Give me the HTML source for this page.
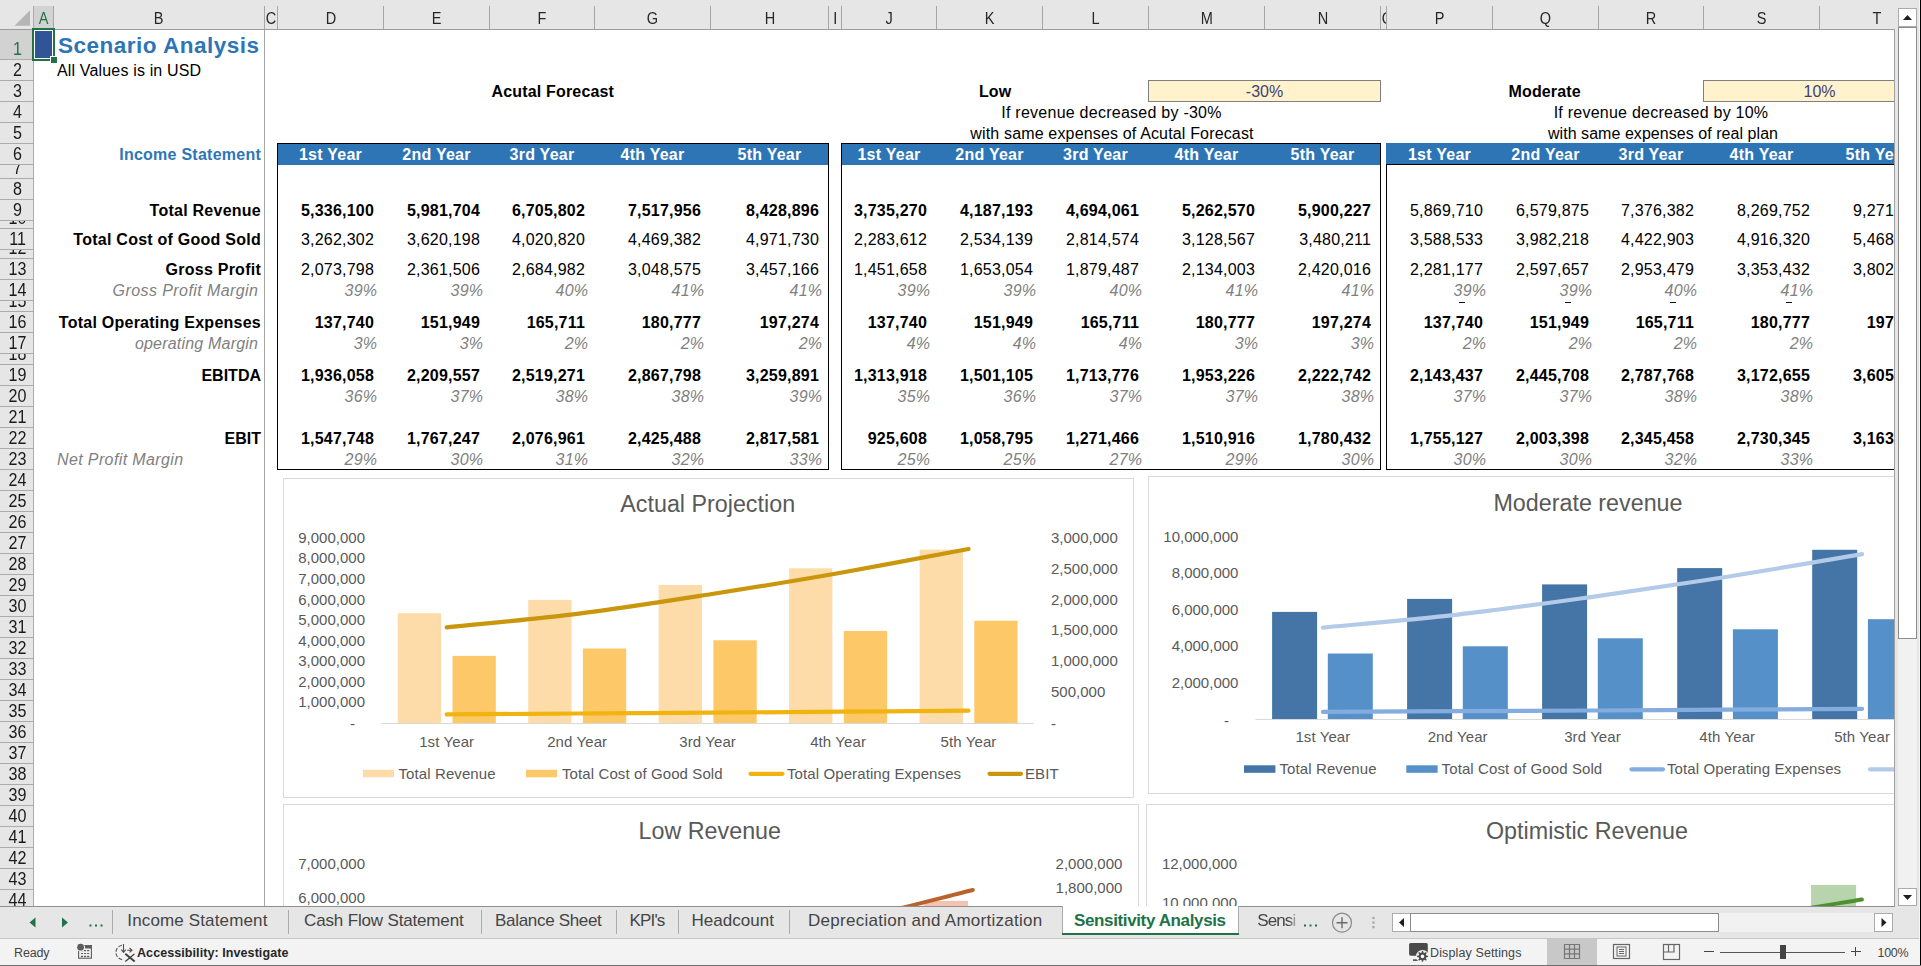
<!DOCTYPE html><html><head><meta charset="utf-8"><title>Scenario Analysis</title><style>
*{box-sizing:border-box;margin:0;padding:0}
html,body{width:1921px;height:966px;overflow:hidden;background:#e6e6e6;font-family:"Liberation Sans",sans-serif;}
.abs{position:absolute}
#grid{position:absolute;left:34px;top:30px;width:1860px;height:877px;background:#fff;overflow:hidden}
.t{position:absolute;white-space:nowrap;font-size:16px;line-height:21px;height:21px;color:#000}
.b{font-weight:bold;letter-spacing:0.25px}
.n{letter-spacing:0.2px}
.i{font-style:italic;color:#808080;letter-spacing:0.2px}
.r{text-align:right}
.c{text-align:center}
.ch{position:absolute;top:6px;height:23px;border-right:1px solid #a6a6a6;text-align:center;font-size:16.5px;line-height:24px;color:#262626;overflow:hidden}
.ch span{display:inline-block;transform:scaleX(.88)}
.rh{position:absolute;left:0;width:33px;border-bottom:1px solid #ababab;text-align:center;font-size:17.5px;color:#1a1a1a;overflow:hidden}
.rh span{position:absolute;left:0.5px;width:33px;bottom:-0.8px;transform:scaleX(.92);line-height:21px;text-align:center}
.hd{position:absolute;background:#2e75b6;color:#fff;font-weight:bold;font-size:16px;line-height:21px;height:21px;text-align:center;white-space:nowrap;letter-spacing:0.25px}
.tab{position:absolute;top:907px;height:27px;line-height:27px;font-size:17px;color:#444;white-space:nowrap;text-align:left}
.st{position:absolute;top:940px;height:26px;line-height:26px;font-size:12.5px;color:#444;white-space:nowrap}
.ct{position:absolute;white-space:nowrap;color:#595959;font-size:15px;line-height:18px;height:18px;letter-spacing:0.1px}
</style></head><body>
<div class="abs" style="left:0;top:0;width:1921px;height:30px;background:#e6e6e6"></div>
<div class="abs" style="left:0;top:29px;width:1895px;height:1px;background:#9b9b9b"></div>
<svg class="abs" style="left:0;top:0" width="34" height="30"><polygon points="30,10.3 30,25.8 14.5,25.8" fill="#b5b5b5"/></svg>
<div class="ch" style="left:34px;width:20px;background:#d2d2d2;color:#217346;"><span>A</span></div>
<div class="ch" style="left:54px;width:211px;"><span>B</span></div>
<div class="ch" style="left:265px;width:13px;"><span>C</span></div>
<div class="ch" style="left:278px;width:106px;"><span>D</span></div>
<div class="ch" style="left:384px;width:106px;"><span>E</span></div>
<div class="ch" style="left:490px;width:105px;"><span>F</span></div>
<div class="ch" style="left:595px;width:116px;"><span>G</span></div>
<div class="ch" style="left:711px;width:118px;"><span>H</span></div>
<div class="ch" style="left:829px;width:13px;"><span>I</span></div>
<div class="ch" style="left:842px;width:95px;"><span>J</span></div>
<div class="ch" style="left:937px;width:106px;"><span>K</span></div>
<div class="ch" style="left:1043px;width:106px;"><span>L</span></div>
<div class="ch" style="left:1149px;width:116px;"><span>M</span></div>
<div class="ch" style="left:1265px;width:116px;"><span>N</span></div>
<div class="ch" style="left:1381px;width:6px;"><span>O</span></div>
<div class="ch" style="left:1387px;width:106px;"><span>P</span></div>
<div class="ch" style="left:1493px;width:106px;"><span>Q</span></div>
<div class="ch" style="left:1599px;width:105px;"><span>R</span></div>
<div class="ch" style="left:1704px;width:116px;"><span>S</span></div>
<div class="ch" style="left:1820px;width:116px;"><span>T</span></div>
<div class="abs" style="left:33px;top:6px;width:1px;height:901px;background:#ababab"></div>
<div class="abs" style="left:0;top:30px;width:33px;height:877px;overflow:hidden">
<div class="rh" style="top:0px;height:30px;background:#d2d2d2;color:#217346;"><span>1</span></div>
<div class="rh" style="top:30px;height:21px;"><span>2</span></div>
<div class="rh" style="top:51px;height:21px;"><span>3</span></div>
<div class="rh" style="top:72px;height:21px;"><span>4</span></div>
<div class="rh" style="top:93px;height:21px;"><span>5</span></div>
<div class="rh" style="top:114px;height:21px;"><span>6</span></div>
<div class="rh" style="top:135px;height:14px;"><span>7</span></div>
<div class="rh" style="top:149px;height:21px;"><span>8</span></div>
<div class="rh" style="top:170px;height:21px;"><span>9</span></div>
<div class="rh" style="top:191px;height:8px;"><span>10</span></div>
<div class="rh" style="top:199px;height:21px;"><span>11</span></div>
<div class="rh" style="top:220px;height:9px;"><span>12</span></div>
<div class="rh" style="top:229px;height:21px;"><span>13</span></div>
<div class="rh" style="top:250px;height:21px;"><span>14</span></div>
<div class="rh" style="top:271px;height:11px;"><span>15</span></div>
<div class="rh" style="top:282px;height:21px;"><span>16</span></div>
<div class="rh" style="top:303px;height:21px;"><span>17</span></div>
<div class="rh" style="top:324px;height:11px;"><span>18</span></div>
<div class="rh" style="top:335px;height:21px;"><span>19</span></div>
<div class="rh" style="top:356px;height:21px;"><span>20</span></div>
<div class="rh" style="top:377px;height:21px;"><span>21</span></div>
<div class="rh" style="top:398px;height:21px;"><span>22</span></div>
<div class="rh" style="top:419px;height:21px;"><span>23</span></div>
<div class="rh" style="top:440px;height:21px;"><span>24</span></div>
<div class="rh" style="top:461px;height:21px;"><span>25</span></div>
<div class="rh" style="top:482px;height:21px;"><span>26</span></div>
<div class="rh" style="top:503px;height:21px;"><span>27</span></div>
<div class="rh" style="top:524px;height:21px;"><span>28</span></div>
<div class="rh" style="top:545px;height:21px;"><span>29</span></div>
<div class="rh" style="top:566px;height:21px;"><span>30</span></div>
<div class="rh" style="top:587px;height:21px;"><span>31</span></div>
<div class="rh" style="top:608px;height:21px;"><span>32</span></div>
<div class="rh" style="top:629px;height:21px;"><span>33</span></div>
<div class="rh" style="top:650px;height:21px;"><span>34</span></div>
<div class="rh" style="top:671px;height:21px;"><span>35</span></div>
<div class="rh" style="top:692px;height:21px;"><span>36</span></div>
<div class="rh" style="top:713px;height:21px;"><span>37</span></div>
<div class="rh" style="top:734px;height:21px;"><span>38</span></div>
<div class="rh" style="top:755px;height:21px;"><span>39</span></div>
<div class="rh" style="top:776px;height:21px;"><span>40</span></div>
<div class="rh" style="top:797px;height:21px;"><span>41</span></div>
<div class="rh" style="top:818px;height:21px;"><span>42</span></div>
<div class="rh" style="top:839px;height:21px;"><span>43</span></div>
<div class="rh" style="top:860px;height:21px;"><span>44</span></div>
</div>
<div id="grid">
<div class="abs" style="left:0px;top:0px;width:19px;height:29px;background:#2f5597"></div>
<div class="t b" style="left:24px;top:1px;font-size:22.5px;line-height:29px;height:29px;color:#2e75b6;letter-spacing:0.5px">Scenario Analysis</div>
<div class="t " style="left:23px;top:30px;letter-spacing:0.16px">All Values is in USD</div>
<div class="t b r" style="left:-73px;top:114px;width:300px;color:#2e75b6">Income Statement</div>
<div class="t b r" style="left:-73px;top:170px;width:300px;">Total Revenue</div>
<div class="t b r" style="left:-73px;top:199px;width:300px;">Total Cost of Good Sold</div>
<div class="t b r" style="left:-73px;top:229px;width:300px;">Gross Profit</div>
<div class="t i r" style="left:-75.60000000000002px;top:250px;width:300px;letter-spacing:0.42px">Gross Profit Margin</div>
<div class="t b r" style="left:-73px;top:282px;width:300px;">Total Operating Expenses</div>
<div class="t i r" style="left:-75.80000000000001px;top:303px;width:300px;">operating Margin</div>
<div class="t b r" style="left:-73px;top:335px;width:300px;letter-spacing:0">EBITDA</div>
<div class="t b r" style="left:-73px;top:398px;width:300px;letter-spacing:0">EBIT</div>
<div class="t i" style="left:23px;top:419px;letter-spacing:0.38px">Net Profit Margin</div>
<div class="t b" style="left:457.5px;top:51px;letter-spacing:0.17px">Acutal Forecast</div>
<div class="t b" style="left:945px;top:51px;letter-spacing:0.1px">Low</div>
<div class="t b" style="left:1474.5px;top:51px;letter-spacing:0.14px">Moderate</div>
<div class="abs" style="left:1114px;top:50px;width:233px;height:22px;background:#fff2cc;border:1px solid #7f7f7f"></div>
<div class="t c" style="left:1114px;top:51px;width:233px;color:#3f3f76">-30%</div>
<div class="abs" style="left:1669px;top:50px;width:233px;height:22px;background:#fff2cc;border:1px solid #7f7f7f"></div>
<div class="t c" style="left:1669px;top:51px;width:233px;color:#3f3f76">10%</div>
<div class="t c" style="left:807.5px;top:72px;width:540px;letter-spacing:0.25px">If revenue decreased by -30%</div>
<div class="t c" style="left:808px;top:93px;width:540px;letter-spacing:0.16px">with same expenses of Acutal Forecast</div>
<div class="t c" style="left:1352.5px;top:72px;width:549px;letter-spacing:0.24px">If revenue decreased by 10%</div>
<div class="t c" style="left:1354.5px;top:93px;width:549px;letter-spacing:0.05px">with same expenses of real plan</div>
<div class="abs" style="left:243px;top:114px;width:552px;height:21px;background:#2e75b6"></div>
<div class="hd" style="left:244px;top:114px;width:105px;">1st Year</div>
<div class="hd" style="left:350px;top:114px;width:105px;">2nd Year</div>
<div class="hd" style="left:456px;top:114px;width:104px;">3rd Year</div>
<div class="hd" style="left:561px;top:114px;width:115px;">4th Year</div>
<div class="hd" style="left:677px;top:114px;width:117px;">5th Year</div>
<div class="abs" style="left:243px;top:113px;width:552px;height:327px;border:1px solid #000"></div>
<div class="t n b r" style="left:230.0px;top:170px;width:110px;letter-spacing:0.2px">5,336,100</div>
<div class="t n b r" style="left:336.0px;top:170px;width:110px;letter-spacing:0.2px">5,981,704</div>
<div class="t n b r" style="left:441.0px;top:170px;width:110px;letter-spacing:0.2px">6,705,802</div>
<div class="t n b r" style="left:557.0px;top:170px;width:110px;letter-spacing:0.2px">7,517,956</div>
<div class="t n b r" style="left:675.0px;top:170px;width:110px;letter-spacing:0.2px">8,428,896</div>
<div class="t n r" style="left:230.0px;top:199px;width:110px;letter-spacing:0.2px">3,262,302</div>
<div class="t n r" style="left:336.0px;top:199px;width:110px;letter-spacing:0.2px">3,620,198</div>
<div class="t n r" style="left:441.0px;top:199px;width:110px;letter-spacing:0.2px">4,020,820</div>
<div class="t n r" style="left:557.0px;top:199px;width:110px;letter-spacing:0.2px">4,469,382</div>
<div class="t n r" style="left:675.0px;top:199px;width:110px;letter-spacing:0.2px">4,971,730</div>
<div class="t n r" style="left:230.0px;top:229px;width:110px;letter-spacing:0.2px">2,073,798</div>
<div class="t n r" style="left:336.0px;top:229px;width:110px;letter-spacing:0.2px">2,361,506</div>
<div class="t n r" style="left:441.0px;top:229px;width:110px;letter-spacing:0.2px">2,684,982</div>
<div class="t n r" style="left:557.0px;top:229px;width:110px;letter-spacing:0.2px">3,048,575</div>
<div class="t n r" style="left:675.0px;top:229px;width:110px;letter-spacing:0.2px">3,457,166</div>
<div class="t i r" style="left:233.2px;top:250px;width:110px;">39%</div>
<div class="t i r" style="left:339.2px;top:250px;width:110px;">39%</div>
<div class="t i r" style="left:444.20000000000005px;top:250px;width:110px;">40%</div>
<div class="t i r" style="left:560.2px;top:250px;width:110px;">41%</div>
<div class="t i r" style="left:678.2px;top:250px;width:110px;">41%</div>
<div class="t n b r" style="left:230.0px;top:282px;width:110px;letter-spacing:0.2px">137,740</div>
<div class="t n b r" style="left:336.0px;top:282px;width:110px;letter-spacing:0.2px">151,949</div>
<div class="t n b r" style="left:441.0px;top:282px;width:110px;letter-spacing:0.2px">165,711</div>
<div class="t n b r" style="left:557.0px;top:282px;width:110px;letter-spacing:0.2px">180,777</div>
<div class="t n b r" style="left:675.0px;top:282px;width:110px;letter-spacing:0.2px">197,274</div>
<div class="t i r" style="left:233.2px;top:303px;width:110px;">3%</div>
<div class="t i r" style="left:339.2px;top:303px;width:110px;">3%</div>
<div class="t i r" style="left:444.20000000000005px;top:303px;width:110px;">2%</div>
<div class="t i r" style="left:560.2px;top:303px;width:110px;">2%</div>
<div class="t i r" style="left:678.2px;top:303px;width:110px;">2%</div>
<div class="t n b r" style="left:230.0px;top:335px;width:110px;letter-spacing:0.2px">1,936,058</div>
<div class="t n b r" style="left:336.0px;top:335px;width:110px;letter-spacing:0.2px">2,209,557</div>
<div class="t n b r" style="left:441.0px;top:335px;width:110px;letter-spacing:0.2px">2,519,271</div>
<div class="t n b r" style="left:557.0px;top:335px;width:110px;letter-spacing:0.2px">2,867,798</div>
<div class="t n b r" style="left:675.0px;top:335px;width:110px;letter-spacing:0.2px">3,259,891</div>
<div class="t i r" style="left:233.2px;top:356px;width:110px;">36%</div>
<div class="t i r" style="left:339.2px;top:356px;width:110px;">37%</div>
<div class="t i r" style="left:444.20000000000005px;top:356px;width:110px;">38%</div>
<div class="t i r" style="left:560.2px;top:356px;width:110px;">38%</div>
<div class="t i r" style="left:678.2px;top:356px;width:110px;">39%</div>
<div class="t n b r" style="left:230.0px;top:398px;width:110px;letter-spacing:0.2px">1,547,748</div>
<div class="t n b r" style="left:336.0px;top:398px;width:110px;letter-spacing:0.2px">1,767,247</div>
<div class="t n b r" style="left:441.0px;top:398px;width:110px;letter-spacing:0.2px">2,076,961</div>
<div class="t n b r" style="left:557.0px;top:398px;width:110px;letter-spacing:0.2px">2,425,488</div>
<div class="t n b r" style="left:675.0px;top:398px;width:110px;letter-spacing:0.2px">2,817,581</div>
<div class="t i r" style="left:233.2px;top:419px;width:110px;">29%</div>
<div class="t i r" style="left:339.2px;top:419px;width:110px;">30%</div>
<div class="t i r" style="left:444.20000000000005px;top:419px;width:110px;">31%</div>
<div class="t i r" style="left:560.2px;top:419px;width:110px;">32%</div>
<div class="t i r" style="left:678.2px;top:419px;width:110px;">33%</div>
<div class="abs" style="left:807px;top:114px;width:540px;height:21px;background:#2e75b6"></div>
<div class="hd" style="left:808px;top:114px;width:94px;">1st Year</div>
<div class="hd" style="left:903px;top:114px;width:105px;">2nd Year</div>
<div class="hd" style="left:1009px;top:114px;width:105px;">3rd Year</div>
<div class="hd" style="left:1115px;top:114px;width:115px;">4th Year</div>
<div class="hd" style="left:1231px;top:114px;width:115px;">5th Year</div>
<div class="abs" style="left:807px;top:113px;width:540px;height:327px;border:1px solid #000"></div>
<div class="t n b r" style="left:783.0px;top:170px;width:110px;letter-spacing:0.2px">3,735,270</div>
<div class="t n b r" style="left:889.0px;top:170px;width:110px;letter-spacing:0.2px">4,187,193</div>
<div class="t n b r" style="left:995.0px;top:170px;width:110px;letter-spacing:0.2px">4,694,061</div>
<div class="t n b r" style="left:1111.0px;top:170px;width:110px;letter-spacing:0.2px">5,262,570</div>
<div class="t n b r" style="left:1227.0px;top:170px;width:110px;letter-spacing:0.2px">5,900,227</div>
<div class="t n r" style="left:783.0px;top:199px;width:110px;letter-spacing:0.2px">2,283,612</div>
<div class="t n r" style="left:889.0px;top:199px;width:110px;letter-spacing:0.2px">2,534,139</div>
<div class="t n r" style="left:995.0px;top:199px;width:110px;letter-spacing:0.2px">2,814,574</div>
<div class="t n r" style="left:1111.0px;top:199px;width:110px;letter-spacing:0.2px">3,128,567</div>
<div class="t n r" style="left:1227.0px;top:199px;width:110px;letter-spacing:0.2px">3,480,211</div>
<div class="t n r" style="left:783.0px;top:229px;width:110px;letter-spacing:0.2px">1,451,658</div>
<div class="t n r" style="left:889.0px;top:229px;width:110px;letter-spacing:0.2px">1,653,054</div>
<div class="t n r" style="left:995.0px;top:229px;width:110px;letter-spacing:0.2px">1,879,487</div>
<div class="t n r" style="left:1111.0px;top:229px;width:110px;letter-spacing:0.2px">2,134,003</div>
<div class="t n r" style="left:1227.0px;top:229px;width:110px;letter-spacing:0.2px">2,420,016</div>
<div class="t i r" style="left:786.2px;top:250px;width:110px;">39%</div>
<div class="t i r" style="left:892.2px;top:250px;width:110px;">39%</div>
<div class="t i r" style="left:998.2px;top:250px;width:110px;">40%</div>
<div class="t i r" style="left:1114.2px;top:250px;width:110px;">41%</div>
<div class="t i r" style="left:1230.2px;top:250px;width:110px;">41%</div>
<div class="t n b r" style="left:783.0px;top:282px;width:110px;letter-spacing:0.2px">137,740</div>
<div class="t n b r" style="left:889.0px;top:282px;width:110px;letter-spacing:0.2px">151,949</div>
<div class="t n b r" style="left:995.0px;top:282px;width:110px;letter-spacing:0.2px">165,711</div>
<div class="t n b r" style="left:1111.0px;top:282px;width:110px;letter-spacing:0.2px">180,777</div>
<div class="t n b r" style="left:1227.0px;top:282px;width:110px;letter-spacing:0.2px">197,274</div>
<div class="t i r" style="left:786.2px;top:303px;width:110px;">4%</div>
<div class="t i r" style="left:892.2px;top:303px;width:110px;">4%</div>
<div class="t i r" style="left:998.2px;top:303px;width:110px;">4%</div>
<div class="t i r" style="left:1114.2px;top:303px;width:110px;">3%</div>
<div class="t i r" style="left:1230.2px;top:303px;width:110px;">3%</div>
<div class="t n b r" style="left:783.0px;top:335px;width:110px;letter-spacing:0.2px">1,313,918</div>
<div class="t n b r" style="left:889.0px;top:335px;width:110px;letter-spacing:0.2px">1,501,105</div>
<div class="t n b r" style="left:995.0px;top:335px;width:110px;letter-spacing:0.2px">1,713,776</div>
<div class="t n b r" style="left:1111.0px;top:335px;width:110px;letter-spacing:0.2px">1,953,226</div>
<div class="t n b r" style="left:1227.0px;top:335px;width:110px;letter-spacing:0.2px">2,222,742</div>
<div class="t i r" style="left:786.2px;top:356px;width:110px;">35%</div>
<div class="t i r" style="left:892.2px;top:356px;width:110px;">36%</div>
<div class="t i r" style="left:998.2px;top:356px;width:110px;">37%</div>
<div class="t i r" style="left:1114.2px;top:356px;width:110px;">37%</div>
<div class="t i r" style="left:1230.2px;top:356px;width:110px;">38%</div>
<div class="t n b r" style="left:783.0px;top:398px;width:110px;letter-spacing:0.2px">925,608</div>
<div class="t n b r" style="left:889.0px;top:398px;width:110px;letter-spacing:0.2px">1,058,795</div>
<div class="t n b r" style="left:995.0px;top:398px;width:110px;letter-spacing:0.2px">1,271,466</div>
<div class="t n b r" style="left:1111.0px;top:398px;width:110px;letter-spacing:0.2px">1,510,916</div>
<div class="t n b r" style="left:1227.0px;top:398px;width:110px;letter-spacing:0.2px">1,780,432</div>
<div class="t i r" style="left:786.2px;top:419px;width:110px;">25%</div>
<div class="t i r" style="left:892.2px;top:419px;width:110px;">25%</div>
<div class="t i r" style="left:998.2px;top:419px;width:110px;">27%</div>
<div class="t i r" style="left:1114.2px;top:419px;width:110px;">29%</div>
<div class="t i r" style="left:1230.2px;top:419px;width:110px;">30%</div>
<div class="abs" style="left:1352px;top:113px;width:550px;height:21px;background:#2e75b6"></div>
<div class="hd" style="left:1353px;top:114px;width:105px;">1st Year</div>
<div class="hd" style="left:1459px;top:114px;width:105px;">2nd Year</div>
<div class="hd" style="left:1565px;top:114px;width:104px;">3rd Year</div>
<div class="hd" style="left:1670px;top:114px;width:115px;">4th Year</div>
<div class="hd" style="left:1786px;top:114px;width:115px;">5th Year</div>
<div class="abs" style="left:1352px;top:134px;width:550px;height:306px;border:1px solid #000"></div>
<div class="t n r" style="left:1339.0px;top:170px;width:110px;letter-spacing:0.2px">5,869,710</div>
<div class="t n r" style="left:1445.0px;top:170px;width:110px;letter-spacing:0.2px">6,579,875</div>
<div class="t n r" style="left:1550.0px;top:170px;width:110px;letter-spacing:0.2px">7,376,382</div>
<div class="t n r" style="left:1666.0px;top:170px;width:110px;letter-spacing:0.2px">8,269,752</div>
<div class="t n r" style="left:1782.0px;top:170px;width:110px;letter-spacing:0.2px">9,271,392</div>
<div class="t n r" style="left:1339.0px;top:199px;width:110px;letter-spacing:0.2px">3,588,533</div>
<div class="t n r" style="left:1445.0px;top:199px;width:110px;letter-spacing:0.2px">3,982,218</div>
<div class="t n r" style="left:1550.0px;top:199px;width:110px;letter-spacing:0.2px">4,422,903</div>
<div class="t n r" style="left:1666.0px;top:199px;width:110px;letter-spacing:0.2px">4,916,320</div>
<div class="t n r" style="left:1782.0px;top:199px;width:110px;letter-spacing:0.2px">5,468,903</div>
<div class="t n r" style="left:1339.0px;top:229px;width:110px;letter-spacing:0.2px">2,281,177</div>
<div class="t n r" style="left:1445.0px;top:229px;width:110px;letter-spacing:0.2px">2,597,657</div>
<div class="t n r" style="left:1550.0px;top:229px;width:110px;letter-spacing:0.2px">2,953,479</div>
<div class="t n r" style="left:1666.0px;top:229px;width:110px;letter-spacing:0.2px">3,353,432</div>
<div class="t n r" style="left:1782.0px;top:229px;width:110px;letter-spacing:0.2px">3,802,489</div>
<div class="t i r" style="left:1342.2px;top:250px;width:110px;">39%</div>
<div class="t i r" style="left:1448.2px;top:250px;width:110px;">39%</div>
<div class="t i r" style="left:1553.2px;top:250px;width:110px;">40%</div>
<div class="t i r" style="left:1669.2px;top:250px;width:110px;">41%</div>
<div class="t i r" style="left:1785.2px;top:250px;width:110px;">41%</div>
<div class="t n b r" style="left:1339.0px;top:282px;width:110px;letter-spacing:0.2px">137,740</div>
<div class="t n b r" style="left:1445.0px;top:282px;width:110px;letter-spacing:0.2px">151,949</div>
<div class="t n b r" style="left:1550.0px;top:282px;width:110px;letter-spacing:0.2px">165,711</div>
<div class="t n b r" style="left:1666.0px;top:282px;width:110px;letter-spacing:0.2px">180,777</div>
<div class="t n b r" style="left:1782.0px;top:282px;width:110px;letter-spacing:0.2px">197,274</div>
<div class="t i r" style="left:1342.2px;top:303px;width:110px;">2%</div>
<div class="t i r" style="left:1448.2px;top:303px;width:110px;">2%</div>
<div class="t i r" style="left:1553.2px;top:303px;width:110px;">2%</div>
<div class="t i r" style="left:1669.2px;top:303px;width:110px;">2%</div>
<div class="t i r" style="left:1785.2px;top:303px;width:110px;">2%</div>
<div class="t n b r" style="left:1339.0px;top:335px;width:110px;letter-spacing:0.2px">2,143,437</div>
<div class="t n b r" style="left:1445.0px;top:335px;width:110px;letter-spacing:0.2px">2,445,708</div>
<div class="t n b r" style="left:1550.0px;top:335px;width:110px;letter-spacing:0.2px">2,787,768</div>
<div class="t n b r" style="left:1666.0px;top:335px;width:110px;letter-spacing:0.2px">3,172,655</div>
<div class="t n b r" style="left:1782.0px;top:335px;width:110px;letter-spacing:0.2px">3,605,215</div>
<div class="t i r" style="left:1342.2px;top:356px;width:110px;">37%</div>
<div class="t i r" style="left:1448.2px;top:356px;width:110px;">37%</div>
<div class="t i r" style="left:1553.2px;top:356px;width:110px;">38%</div>
<div class="t i r" style="left:1669.2px;top:356px;width:110px;">38%</div>
<div class="t i r" style="left:1785.2px;top:356px;width:110px;">39%</div>
<div class="t n b r" style="left:1339.0px;top:398px;width:110px;letter-spacing:0.2px">1,755,127</div>
<div class="t n b r" style="left:1445.0px;top:398px;width:110px;letter-spacing:0.2px">2,003,398</div>
<div class="t n b r" style="left:1550.0px;top:398px;width:110px;letter-spacing:0.2px">2,345,458</div>
<div class="t n b r" style="left:1666.0px;top:398px;width:110px;letter-spacing:0.2px">2,730,345</div>
<div class="t n b r" style="left:1782.0px;top:398px;width:110px;letter-spacing:0.2px">3,163,941</div>
<div class="t i r" style="left:1342.2px;top:419px;width:110px;">30%</div>
<div class="t i r" style="left:1448.2px;top:419px;width:110px;">30%</div>
<div class="t i r" style="left:1553.2px;top:419px;width:110px;">32%</div>
<div class="t i r" style="left:1669.2px;top:419px;width:110px;">33%</div>
<div class="t i r" style="left:1785.2px;top:419px;width:110px;">34%</div>
<div class="abs" style="left:1425.3px;top:271.5px;width:5.3px;height:1.5px;background:#111"></div>
<div class="abs" style="left:1531.3px;top:271.5px;width:5.3px;height:1.5px;background:#111"></div>
<div class="abs" style="left:1636.3px;top:271.5px;width:5.3px;height:1.5px;background:#111"></div>
<div class="abs" style="left:1752.3px;top:271.5px;width:5.3px;height:1.5px;background:#111"></div>
<div class="abs" style="left:249px;top:448px;width:851px;height:320px;border:1px solid #d9d9d9;background:#fff;overflow:hidden">
<svg class="abs" style="left:0;top:0" width="849" height="318" viewBox="0 0 849 318">
<rect x="113.8" y="134.2" width="43.3" height="109.8" fill="#fddcaa"/>
<rect x="168.5" y="176.9" width="43.3" height="67.1" fill="#fcc868"/>
<rect x="244.2" y="120.9" width="43.3" height="123.1" fill="#fddcaa"/>
<rect x="298.9" y="169.5" width="43.3" height="74.5" fill="#fcc868"/>
<rect x="374.7" y="106.0" width="43.3" height="138.0" fill="#fddcaa"/>
<rect x="429.4" y="161.3" width="43.3" height="82.7" fill="#fcc868"/>
<rect x="505.1" y="89.3" width="43.3" height="154.7" fill="#fddcaa"/>
<rect x="559.8" y="152.0" width="43.3" height="92.0" fill="#fcc868"/>
<rect x="635.6" y="70.6" width="43.3" height="173.4" fill="#fddcaa"/>
<rect x="690.3" y="141.7" width="43.3" height="102.3" fill="#fcc868"/>
<rect x="97.5" y="244.0" width="652.2" height="1" fill="#d9d9d9"/>
<path d="M162.7,235.4 C184.5,235.3 249.7,234.8 293.2,234.5 C336.7,234.2 380.1,234.0 423.6,233.7 C467.1,233.4 510.6,233.1 554.1,232.7 C597.6,232.4 662.8,231.9 684.5,231.7" fill="none" stroke="#f0b310" stroke-width="4.2" stroke-linecap="round"/>
<path d="M162.7,148.4 C184.5,146.1 249.7,140.2 293.2,134.8 C336.7,129.4 380.1,122.5 423.6,115.7 C467.1,108.9 510.6,101.8 554.1,94.2 C597.6,86.5 662.8,74.0 684.5,70.0" fill="none" stroke="#c9960c" stroke-width="4.2" stroke-linecap="round"/>
<rect x="79.0" y="290.8" width="31.0" height="7.5" fill="#fddcaa"/>
<rect x="242.0" y="290.8" width="31.0" height="7.5" fill="#fcc868"/>
<line x1="466.5" y1="294.8" x2="498.5" y2="294.8" stroke="#f0b310" stroke-width="4.2" stroke-linecap="round"/>
<line x1="705.5" y1="294.8" x2="737.0" y2="294.8" stroke="#c9960c" stroke-width="4.2" stroke-linecap="round"/>
</svg>
<div class="ct" style="left:123.70000000000005px;width:600px;text-align:center;top:9.5px;height:30px;line-height:30px;font-size:23.3px;letter-spacing:0">Actual Projection</div>
<div class="ct" style="left:-39px;width:120px;text-align:right;letter-spacing:0;top:49.8px">9,000,000</div>
<div class="ct" style="left:-39px;width:120px;text-align:right;letter-spacing:0;top:70.4px">8,000,000</div>
<div class="ct" style="left:-39px;width:120px;text-align:right;letter-spacing:0;top:91.0px">7,000,000</div>
<div class="ct" style="left:-39px;width:120px;text-align:right;letter-spacing:0;top:111.5px">6,000,000</div>
<div class="ct" style="left:-39px;width:120px;text-align:right;letter-spacing:0;top:132.1px">5,000,000</div>
<div class="ct" style="left:-39px;width:120px;text-align:right;letter-spacing:0;top:152.7px">4,000,000</div>
<div class="ct" style="left:-39px;width:120px;text-align:right;letter-spacing:0;top:173.3px">3,000,000</div>
<div class="ct" style="left:-39px;width:120px;text-align:right;letter-spacing:0;top:193.8px">2,000,000</div>
<div class="ct" style="left:-39px;width:120px;text-align:right;letter-spacing:0;top:214.4px">1,000,000</div>
<div class="ct" style="left:-49px;width:120px;text-align:right;letter-spacing:0;top:236.0px">-</div>
<div class="ct" style="left:767px;letter-spacing:0;top:49.8px">3,000,000</div>
<div class="ct" style="left:767px;letter-spacing:0;top:80.7px">2,500,000</div>
<div class="ct" style="left:767px;letter-spacing:0;top:111.5px">2,000,000</div>
<div class="ct" style="left:767px;letter-spacing:0;top:142.4px">1,500,000</div>
<div class="ct" style="left:767px;letter-spacing:0;top:173.3px">1,000,000</div>
<div class="ct" style="left:767px;letter-spacing:0;top:204.1px">500,000</div>
<div class="ct" style="left:767px;letter-spacing:0;top:236.0px">-</div>
<div class="ct" style="left:102.7px;width:120px;text-align:center;top:253.6px">1st Year</div>
<div class="ct" style="left:233.2px;width:120px;text-align:center;top:253.6px">2nd Year</div>
<div class="ct" style="left:363.6px;width:120px;text-align:center;top:253.6px">3rd Year</div>
<div class="ct" style="left:494.1px;width:120px;text-align:center;top:253.6px">4th Year</div>
<div class="ct" style="left:624.5px;width:120px;text-align:center;top:253.6px">5th Year</div>
<div class="ct" style="left:114.5px;top:286.0px">Total Revenue</div>
<div class="ct" style="left:278px;top:286.0px">Total Cost of Good Sold</div>
<div class="ct" style="left:503px;top:286.0px">Total Operating Expenses</div>
<div class="ct" style="left:741px;top:286.0px">EBIT</div>
</div>
<div class="abs" style="left:1114px;top:446px;width:881px;height:318px;border:1px solid #d9d9d9;background:#fff;overflow:hidden">
<svg class="abs" style="left:0;top:0" width="879" height="316" viewBox="0 0 879 316">
<rect x="123.1" y="134.9" width="45.0" height="107.1" fill="#4475a6"/>
<rect x="178.8" y="176.5" width="45.0" height="65.5" fill="#5590c8"/>
<rect x="258.1" y="121.9" width="45.0" height="120.1" fill="#4475a6"/>
<rect x="313.8" y="169.3" width="45.0" height="72.7" fill="#5590c8"/>
<rect x="393.1" y="107.4" width="45.0" height="134.6" fill="#4475a6"/>
<rect x="448.8" y="161.3" width="45.0" height="80.7" fill="#5590c8"/>
<rect x="528.2" y="91.1" width="45.0" height="150.9" fill="#4475a6"/>
<rect x="583.9" y="152.3" width="45.0" height="89.7" fill="#5590c8"/>
<rect x="663.2" y="72.8" width="45.0" height="169.2" fill="#4475a6"/>
<rect x="718.9" y="142.2" width="45.0" height="99.8" fill="#5590c8"/>
<rect x="106.5" y="242.0" width="674.0" height="1" fill="#d9d9d9"/>
<path d="M173.9,234.9 C196.4,234.8 263.8,234.4 308.7,234.2 C353.6,233.9 398.6,233.7 443.5,233.5 C488.4,233.2 533.4,232.9 578.3,232.7 C623.2,232.4 690.6,232.0 713.1,231.8" fill="none" stroke="#84acde" stroke-width="4.2" stroke-linecap="round"/>
<path d="M173.9,150.6 C196.4,148.4 263.8,142.8 308.7,137.6 C353.6,132.5 398.6,126.1 443.5,119.8 C488.4,113.5 533.4,106.8 578.3,99.7 C623.2,92.6 690.6,80.9 713.1,77.1" fill="none" stroke="#b3cae8" stroke-width="4.2" stroke-linecap="round"/>
<rect x="95.0" y="288.3" width="31.4" height="7.5" fill="#4475a6"/>
<rect x="257.3" y="288.3" width="31.3" height="7.5" fill="#5590c8"/>
<line x1="482.5" y1="292.3" x2="514.0" y2="292.3" stroke="#84acde" stroke-width="4.2" stroke-linecap="round"/>
<line x1="721.0" y1="292.3" x2="752.5" y2="292.3" stroke="#b3cae8" stroke-width="4.2" stroke-linecap="round"/>
</svg>
<div class="ct" style="left:139px;width:600px;text-align:center;top:11.0px;height:30px;line-height:30px;font-size:23.3px;letter-spacing:0">Moderate revenue</div>
<div class="ct" style="left:-30.59999999999991px;width:120px;text-align:right;letter-spacing:0;top:50.5px">10,000,000</div>
<div class="ct" style="left:-30.59999999999991px;width:120px;text-align:right;letter-spacing:0;top:87.0px">8,000,000</div>
<div class="ct" style="left:-30.59999999999991px;width:120px;text-align:right;letter-spacing:0;top:123.5px">6,000,000</div>
<div class="ct" style="left:-30.59999999999991px;width:120px;text-align:right;letter-spacing:0;top:160.0px">4,000,000</div>
<div class="ct" style="left:-30.59999999999991px;width:120px;text-align:right;letter-spacing:0;top:196.5px">2,000,000</div>
<div class="ct" style="left:-40px;width:120px;text-align:right;letter-spacing:0;top:235.0px">-</div>
<div class="ct" style="left:113.9px;width:120px;text-align:center;top:250.7px">1st Year</div>
<div class="ct" style="left:248.7px;width:120px;text-align:center;top:250.7px">2nd Year</div>
<div class="ct" style="left:383.5px;width:120px;text-align:center;top:250.7px">3rd Year</div>
<div class="ct" style="left:518.3px;width:120px;text-align:center;top:250.7px">4th Year</div>
<div class="ct" style="left:653.1px;width:120px;text-align:center;top:250.7px">5th Year</div>
<div class="ct" style="left:130.5px;top:282.5px">Total Revenue</div>
<div class="ct" style="left:292.5999999999999px;top:282.5px">Total Cost of Good Sold</div>
<div class="ct" style="left:518px;top:282.5px">Total Operating Expenses</div>
<div class="ct" style="left:757px;top:282.5px">EBIT</div>
</div>
<div class="abs" style="left:249px;top:774px;width:856px;height:330px;border:1px solid #d9d9d9;background:#fff;overflow:hidden">
<svg class="abs" style="left:0;top:0" width="854" height="328" viewBox="0 0 854 328">
<rect x="114.5" y="170.2" width="43.9" height="128.1" fill="#f4c2b0"/>
<rect x="169.8" y="220.0" width="43.9" height="78.3" fill="#f0a27c"/>
<rect x="245.9" y="154.7" width="43.9" height="143.6" fill="#f4c2b0"/>
<rect x="301.2" y="211.4" width="43.9" height="86.9" fill="#f0a27c"/>
<rect x="377.3" y="137.3" width="43.9" height="161.0" fill="#f4c2b0"/>
<rect x="432.6" y="201.8" width="43.9" height="96.5" fill="#f0a27c"/>
<rect x="508.7" y="117.8" width="43.9" height="180.5" fill="#f4c2b0"/>
<rect x="564.0" y="191.0" width="43.9" height="107.3" fill="#f0a27c"/>
<rect x="640.1" y="95.9" width="43.9" height="202.4" fill="#f4c2b0"/>
<rect x="695.4" y="178.9" width="43.9" height="119.4" fill="#f0a27c"/>
<rect x="97.5" y="298.3" width="657.0" height="1" fill="#d9d9d9"/>
<path d="M163.2,284.6 C185.1,284.3 250.8,283.4 294.6,282.8 C338.4,282.3 382.2,281.7 426.0,281.2 C469.8,280.6 513.6,280.0 557.4,279.3 C601.2,278.7 666.9,277.7 688.8,277.3" fill="none" stroke="#d9762f" stroke-width="4" stroke-linecap="round"/>
<path d="M163.2,188.8 C185.1,186.1 250.8,179.7 294.6,172.7 C338.4,165.7 382.2,156.0 426.0,146.8 C469.8,137.7 513.6,128.0 557.4,117.7 C601.2,107.4 666.9,90.4 688.8,85.0" fill="none" stroke="#b9622a" stroke-width="4" stroke-linecap="round"/>
</svg>
<div class="ct" style="left:125.79999999999995px;width:600px;text-align:center;top:10.5px;height:30px;line-height:30px;font-size:23.3px;letter-spacing:0">Low Revenue</div>
<div class="ct" style="left:-39px;width:120px;text-align:right;letter-spacing:0;top:49.8px">7,000,000</div>
<div class="ct" style="left:-39px;width:120px;text-align:right;letter-spacing:0;top:84.1px">6,000,000</div>
<div class="ct" style="left:-39px;width:120px;text-align:right;letter-spacing:0;top:118.4px">5,000,000</div>
<div class="ct" style="left:-39px;width:120px;text-align:right;letter-spacing:0;top:152.7px">4,000,000</div>
<div class="ct" style="left:-39px;width:120px;text-align:right;letter-spacing:0;top:187.0px">3,000,000</div>
<div class="ct" style="left:-39px;width:120px;text-align:right;letter-spacing:0;top:221.3px">2,000,000</div>
<div class="ct" style="left:-39px;width:120px;text-align:right;letter-spacing:0;top:255.6px">1,000,000</div>
<div class="ct" style="left:771.5999999999999px;letter-spacing:0;top:49.8px">2,000,000</div>
<div class="ct" style="left:771.5999999999999px;letter-spacing:0;top:74.1px">1,800,000</div>
<div class="ct" style="left:771.5999999999999px;letter-spacing:0;top:98.4px">1,600,000</div>
<div class="ct" style="left:771.5999999999999px;letter-spacing:0;top:122.7px">1,400,000</div>
<div class="ct" style="left:771.5999999999999px;letter-spacing:0;top:147.0px">1,200,000</div>
<div class="ct" style="left:771.5999999999999px;letter-spacing:0;top:171.3px">1,000,000</div>
<div class="ct" style="left:771.5999999999999px;letter-spacing:0;top:195.6px">800,000</div>
<div class="ct" style="left:771.5999999999999px;letter-spacing:0;top:219.9px">600,000</div>
<div class="ct" style="left:771.5999999999999px;letter-spacing:0;top:244.2px">400,000</div>
<div class="ct" style="left:771.5999999999999px;letter-spacing:0;top:268.5px">200,000</div>
<div class="ct" style="left:103.2px;width:120px;text-align:center;top:311.0px">1st Year</div>
<div class="ct" style="left:234.6px;width:120px;text-align:center;top:311.0px">2nd Year</div>
<div class="ct" style="left:366.0px;width:120px;text-align:center;top:311.0px">3rd Year</div>
<div class="ct" style="left:497.4px;width:120px;text-align:center;top:311.0px">4th Year</div>
<div class="ct" style="left:628.8px;width:120px;text-align:center;top:311.0px">5th Year</div>
</div>
<div class="abs" style="left:1112px;top:774px;width:882px;height:330px;border:1px solid #d9d9d9;background:#fff;overflow:hidden">
<svg class="abs" style="left:0;top:0" width="880" height="328" viewBox="0 0 880 328">
<rect x="124.9" y="157.0" width="45.0" height="133.5" fill="#b8d4ac"/>
<rect x="180.6" y="208.9" width="45.0" height="81.6" fill="#8fc27a"/>
<rect x="259.7" y="140.8" width="45.0" height="149.7" fill="#b8d4ac"/>
<rect x="315.4" y="199.9" width="45.0" height="90.6" fill="#8fc27a"/>
<rect x="394.5" y="122.7" width="45.0" height="167.8" fill="#b8d4ac"/>
<rect x="450.2" y="189.9" width="45.0" height="100.6" fill="#8fc27a"/>
<rect x="529.3" y="102.4" width="45.0" height="188.1" fill="#b8d4ac"/>
<rect x="585.0" y="178.7" width="45.0" height="111.8" fill="#8fc27a"/>
<rect x="664.1" y="79.9" width="45.0" height="210.6" fill="#b8d4ac"/>
<rect x="719.8" y="166.1" width="45.0" height="124.4" fill="#8fc27a"/>
<rect x="108.3" y="290.5" width="674.0" height="1" fill="#d9d9d9"/>
<path d="M175.7,282.7 C198.2,282.6 265.6,282.2 310.5,281.9 C355.4,281.6 400.4,281.3 445.3,281.1 C490.2,280.8 535.2,280.5 580.1,280.2 C625.0,279.8 692.4,279.3 714.9,279.2" fill="none" stroke="#6aa84f" stroke-width="4" stroke-linecap="round"/>
<path d="M175.7,153.0 C198.2,151.0 265.6,145.2 310.5,141.0 C355.4,136.8 400.4,132.1 445.3,127.8 C490.2,123.5 535.2,120.8 580.1,115.2 C625.0,109.7 692.4,98.0 714.9,94.5" fill="none" stroke="#4e8f30" stroke-width="4" stroke-linecap="round"/>
</svg>
<div class="ct" style="left:140px;width:600px;text-align:center;top:10.899999999999977px;height:30px;line-height:30px;font-size:23.3px;letter-spacing:0">Optimistic Revenue</div>
<div class="ct" style="left:-30px;width:120px;text-align:right;letter-spacing:0;top:50.3px">12,000,000</div>
<div class="ct" style="left:-30px;width:120px;text-align:right;letter-spacing:0;top:88.8px">10,000,000</div>
<div class="ct" style="left:-30px;width:120px;text-align:right;letter-spacing:0;top:127.3px">8,000,000</div>
<div class="ct" style="left:-30px;width:120px;text-align:right;letter-spacing:0;top:165.8px">6,000,000</div>
<div class="ct" style="left:-30px;width:120px;text-align:right;letter-spacing:0;top:204.3px">4,000,000</div>
<div class="ct" style="left:-30px;width:120px;text-align:right;letter-spacing:0;top:242.8px">2,000,000</div>
<div class="ct" style="left:115.7px;width:120px;text-align:center;top:311.0px">1st Year</div>
<div class="ct" style="left:250.5px;width:120px;text-align:center;top:311.0px">2nd Year</div>
<div class="ct" style="left:385.3px;width:120px;text-align:center;top:311.0px">3rd Year</div>
<div class="ct" style="left:520.1px;width:120px;text-align:center;top:311.0px">4th Year</div>
<div class="ct" style="left:654.9px;width:120px;text-align:center;top:311.0px">5th Year</div>
</div>
<div class="abs" style="left:230px;top:0;width:1px;height:877px;background:#a6a6a6"></div>
<div class="abs" style="left:-2px;top:-2px;width:23px;height:33px;border:2px solid #217346;background:transparent"></div>
</div>
<div class="abs" style="left:32px;top:28px;width:23px;height:33px;border:2px solid #217346"></div>
<div class="abs" style="left:34px;top:30px;width:19px;height:29px;border:1px solid #fff"></div>
<div class="abs" style="left:50px;top:56px;width:6.5px;height:6.5px;background:#217346;border-left:1px solid #fff;border-top:1px solid #fff"></div>
<div class="abs" style="left:1894px;top:29px;width:1px;height:878px;background:#a0a0a0"></div>
<div class="abs" style="left:1895px;top:0;width:25px;height:907px;background:#e6e6e6"></div>
<div class="abs" style="left:1898px;top:27px;width:19px;height:861px;background:#f1f1f1"></div>
<div class="abs" style="left:1898px;top:8px;width:19px;height:19px;background:#fff;border:1px solid #ababab"></div>
<svg class="abs" style="left:1898px;top:8px" width="19" height="19"><polygon points="5,12 14,12 9.5,7" fill="#1e1e1e"/></svg>
<div class="abs" style="left:1898px;top:27px;width:19px;height:612px;background:#fff;border:1px solid #8c8c8c"></div>
<div class="abs" style="left:1898px;top:888px;width:19px;height:18px;background:#fff;border:1px solid #ababab"></div>
<svg class="abs" style="left:1898px;top:888px" width="19" height="18"><polygon points="5,7 14,7 9.5,12" fill="#1e1e1e"/></svg>
<div class="abs" style="left:0;top:907px;width:1920px;height:31px;background:#e6e6e6"></div>
<div class="abs" style="left:0;top:906px;width:1895px;height:1px;background:#8e8e8e"></div>
<svg class="abs" style="left:0;top:907px" width="120" height="31"><polygon points="29.5,15.5 35.5,10.5 35.5,20.5" fill="#217346"/><polygon points="62,10.5 68,15.5 62,20.5" fill="#217346"/><rect x="89.5" y="17.5" width="2" height="2" fill="#217346"/><rect x="95" y="17.5" width="2" height="2" fill="#217346"/><rect x="100.5" y="17.5" width="2" height="2" fill="#217346"/></svg>
<div class="abs" style="left:112px;top:910px;width:1px;height:24px;background:#ababab"></div>
<div class="abs" style="left:288px;top:910px;width:1px;height:24px;background:#ababab"></div>
<div class="abs" style="left:481px;top:910px;width:1px;height:24px;background:#ababab"></div>
<div class="abs" style="left:616px;top:910px;width:1px;height:24px;background:#ababab"></div>
<div class="abs" style="left:678px;top:910px;width:1px;height:24px;background:#ababab"></div>
<div class="abs" style="left:789px;top:910px;width:1px;height:24px;background:#ababab"></div>
<div class="tab" style="left:127.3px;letter-spacing:0.140px">Income Statement</div>
<div class="tab" style="left:304.1px;letter-spacing:-0.164px">Cash Flow Statement</div>
<div class="tab" style="left:495.1px;letter-spacing:-0.322px">Balance Sheet</div>
<div class="tab" style="left:629.5px;letter-spacing:-0.830px">KPI's</div>
<div class="tab" style="left:691.5px;letter-spacing:0.041px">Headcount</div>
<div class="tab" style="left:808.0px;letter-spacing:0.265px">Depreciation and Amortization</div>
<div class="abs" style="left:1062px;top:906px;width:177px;height:27px;background:#fff;border-left:1px solid #ababab;border-right:1px solid #ababab"></div>
<div class="abs" style="left:1062px;top:933px;width:177px;height:2px;background:#217346"></div>
<div class="tab" style="left:1074px;letter-spacing:-0.37px;font-weight:bold;color:#217346">Sensitivity Analysis</div>
<div class="tab" style="left:1257.3px;width:39px;overflow:hidden;text-align:left;letter-spacing:-0.9px;-webkit-mask-image:linear-gradient(90deg,#000 80%,rgba(0,0,0,.35) 100%)">Sensi</div>
<svg class="abs" style="left:1300px;top:907px" width="100" height="31"><rect x="4" y="17.5" width="2" height="2" fill="#217346"/><rect x="9.5" y="17.5" width="2" height="2" fill="#217346"/><rect x="15" y="17.5" width="2" height="2" fill="#217346"/><circle cx="42" cy="15.7" r="9.5" fill="none" stroke="#8a8a8a" stroke-width="1.2"/><path d="M36.5,15.7h11M42,10.2v11" stroke="#6a6a6a" stroke-width="1.4" fill="none"/><rect x="72.3" y="9.8" width="2.300" height="2.300" fill="#a9a9a9"/><rect x="72.3" y="14.4" width="2.300" height="2.300" fill="#a9a9a9"/><rect x="72.3" y="19" width="2.300" height="2.300" fill="#a9a9a9"/></svg>
<div class="abs" style="left:1392px;top:913px;width:501px;height:19px;background:#f1f1f1"></div>
<div class="abs" style="left:1392px;top:913px;width:19px;height:19px;background:#fff;border:1px solid #ababab"></div>
<svg class="abs" style="left:1392px;top:913px" width="19" height="19"><polygon points="7,9.5 12,5 12,14" fill="#1e1e1e"/></svg>
<div class="abs" style="left:1410px;top:913px;width:309px;height:19px;background:#fff;border:1px solid #8c8c8c"></div>
<div class="abs" style="left:1874px;top:913px;width:19px;height:19px;background:#fff;border:1px solid #ababab"></div>
<svg class="abs" style="left:1874px;top:913px" width="19" height="19"><polygon points="12.5,9.5 7.5,5 7.5,14" fill="#1e1e1e"/></svg>
<div class="abs" style="left:0;top:938px;width:1920px;height:28px;background:#f3f3f3;border-top:1px solid #c6c6c6"></div>
<div class="abs" style="left:1547px;top:939px;width:50px;height:26px;background:#c8c8c8"></div>
<div class="st" style="left:14px;letter-spacing:-0.15px">Ready</div>
<div class="st" style="left:137px;letter-spacing:0.08px;font-weight:bold;color:#262626">Accessibility: Investigate</div>
<div class="st" style="left:1430px;letter-spacing:0.12px">Display Settings</div>
<div class="st" style="left:1877.5px;letter-spacing:-0.3px">100%</div>
<svg class="abs" style="left:70px;top:939px" width="80" height="26">
<rect x="8.6" y="6.6" width="12.8" height="12.6" fill="none" stroke="#5c5c5c" stroke-width="1.1"/><rect x="14.9" y="6.1" width="7" height="3.4" fill="#5c5c5c"/>
<path d="M10.9,11.6h2.1M14,11.6h2.1M17.1,11.6h2.1M10.9,14.5h2.1M14,14.5h2.1M17.1,14.5h2.1M10.9,17.4h2.1M14,17.4h2.1M17.1,17.4h2.1" stroke="#5c5c5c" stroke-width="1.1"/>
<circle cx="10.6" cy="8.2" r="4.3" fill="#f3f3f3"/><circle cx="10.600" cy="8.2" r="3.4" fill="#5c5c5c"/>
<path d="M51.9,6.2A7.3,7.3 0 0 0 52.2,20.6" fill="none" stroke="#555" stroke-width="1.1" stroke-dasharray="3.8 1.6"/>
<path d="M53.5,5v8M51.2,10.6L53.5,13.3L55.8,10.600M57.2,11.2h4.800M59.5,9L62,11.2L59.5,13.4" stroke="#505050" stroke-width="1.1" fill="none"/>
<path d="M55.3,14.7L64.7,22.5" stroke="#3c3c3c" stroke-width="1.8"/><path d="M64.4,15L55.3,22.5" stroke="#3c3c3c" stroke-width="1.2"/></svg>
<svg class="abs" style="left:1405px;top:939px" width="30" height="26"><rect x="4.1" y="4.1" width="18.7" height="12.6" rx="1.6" fill="#4a4a4a"/><rect x="8" y="20.3" width="5" height="1.6" fill="#4a4a4a"/>
<circle cx="17.5" cy="17.4" r="6.5" fill="#f3f3f3"/><path d="M21.31,16.55 L22.97,16.80 L22.97,18.00 L21.31,18.25 L20.79,19.49 L21.79,20.84 L20.94,21.69 L19.59,20.69 L18.35,21.21 L18.10,22.87 L16.90,22.87 L16.65,21.21 L15.41,20.69 L14.06,21.69 L13.21,20.84 L14.21,19.49 L13.69,18.25 L12.03,18.00 L12.03,16.80 L13.69,16.55 L14.21,15.31 L13.21,13.96 L14.06,13.11 L15.41,14.11 L16.65,13.59 L16.90,11.93 L18.10,11.93 L18.35,13.59 L19.59,14.11 L20.94,13.11 L21.79,13.96 L20.79,15.31Z" fill="#4a4a4a"/><circle cx="17.5" cy="17.4" r="1.8" fill="#f7f7f7"/></svg>
<svg class="abs" style="left:1547px;top:938.2px" width="160" height="26" fill="none" stroke="#666" stroke-width="1.2">
<path d="M17.5,6.5h15v14h-15zM22.5,6.5v14M27.5,6.5v14M17.5,11.2h15M17.5,15.9h15" stroke="#777"/>
<rect x="66.5" y="6.5" width="16" height="14"/><rect x="70" y="9" width="9" height="9" stroke-width="1"/><path d="M72,11.5h5M72,13.5h5M72,15.5h5" stroke-width="1"/>
<rect x="116.500" y="6.5" width="16" height="15"/><path d="M116.500,14h10.500v-7.5M121.5,6.500v7.500" /></svg>
<div class="abs" style="left:1704px;top:951.2px;width:10px;height:1.1px;background:#444"></div>
<div class="abs" style="left:1720px;top:951.5px;width:125px;height:1px;background:#555"></div>
<div class="abs" style="left:1780px;top:945px;width:6px;height:14px;background:#444"></div>
<div class="abs" style="left:1851px;top:951.2px;width:9.600px;height:1.1px;background:#444"></div><div class="abs" style="left:1855.2px;top:946.6px;width:1.1px;height:9.800px;background:#444"></div>
<div class="abs" style="left:1919px;top:0;width:1px;height:966px;background:#f4f4f4"></div>
<div class="abs" style="left:1920px;top:0;width:1px;height:966px;background:#000"></div>
<div class="abs" style="left:0;top:965px;width:1921px;height:1px;background:#6e6e6e"></div>
</body></html>
